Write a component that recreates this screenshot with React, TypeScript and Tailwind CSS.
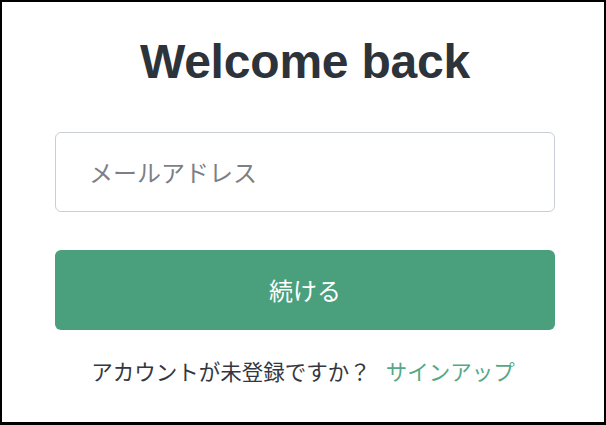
import { FC } from 'react';

const jp = "font-['Noto_Sans_CJK_JP',sans-serif]";

const App: FC = () => {
  return (
    <div className="w-[606px] h-[425px] bg-white border-black border-t-2 border-l-2 border-r-2 border-b-[3px] flex flex-col items-center">
      <h1 className="mt-[32px] ml-[4px] font-['Liberation_Sans',sans-serif] font-bold text-[48px] leading-[56px] tracking-[-0.2px] text-[#2d333a]">
        Welcome back
      </h1>
      <div className="mt-[42px] w-[500px] h-[80px] ml-[4px] border border-[#c9ced6] rounded-md flex items-center px-[33px]">
        <input
          type="email"
          placeholder="メールアドレス"
          className={`${jp} w-full outline-none text-[24px] placeholder:text-[#7d7f88] text-[#2d333a] bg-transparent`}
        />
      </div>
      <button
        className={`${jp} mt-[38px] w-[500px] h-[80px] ml-[4px] rounded-md bg-[#4aa07c] text-white text-[24px] flex items-center justify-center`}
      >
        続ける
      </button>
      <p className={`${jp} mt-[26px] text-[21.5px] leading-[30px] text-[#353740]`}>
        アカウントが未登録ですか？
        <a href="/#" className="ml-[15px] text-[#55a886]">
          サインアップ
        </a>
      </p>
    </div>
  );
};

export default App;
